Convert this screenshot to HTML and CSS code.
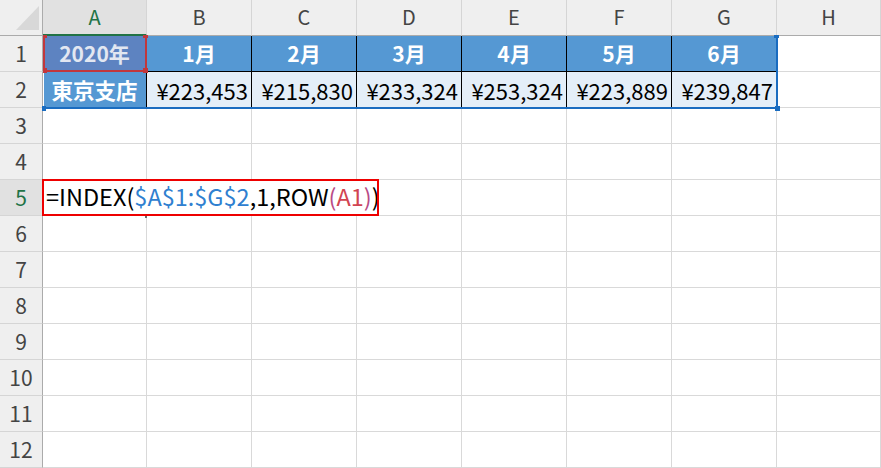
FILE: index.html
```html
<!DOCTYPE html>
<html lang="ja">
<head>
<meta charset="utf-8">
<title>Sheet</title>
<link rel="stylesheet" href="styles.css">
</head>
<body>
<div class="sheet">
  <div class="corner"><svg class="tri" width="42" height="35" viewBox="0 0 42 35"><polygon points="16,30 39,30 39,6" fill="#d8d8d8"/></svg></div>
  <div class="ch ch-active">A</div><div class="ch">B</div><div class="ch">C</div><div class="ch">D</div><div class="ch">E</div><div class="ch">F</div><div class="ch">G</div><div class="ch">H</div>

  <div class="rh">1</div>
  <div class="c head head-a">2020年</div>
  <div class="c head">1月</div><div class="c head">2月</div><div class="c head">3月</div><div class="c head">4月</div><div class="c head">5月</div><div class="c head">6月</div>
  <div class="c"></div>

  <div class="rh">2</div>
  <div class="c branch">東京支店</div>
  <div class="c val">¥223,453</div><div class="c val">¥215,830</div><div class="c val">¥233,324</div><div class="c val">¥253,324</div><div class="c val">¥223,889</div><div class="c val">¥239,847</div>
  <div class="c"></div>

  <div class="rh">3</div><div class="c"></div><div class="c"></div><div class="c"></div><div class="c"></div><div class="c"></div><div class="c"></div><div class="c"></div><div class="c"></div>
  <div class="rh">4</div><div class="c"></div><div class="c"></div><div class="c"></div><div class="c"></div><div class="c"></div><div class="c"></div><div class="c"></div><div class="c"></div>

  <div class="rh rh-active">5</div>
  <div class="c formula">=INDEX(<span class="ref-blue">$A$1:$G$2</span>,1,ROW<span class="paren">(</span><span class="ref-red">A1</span><span class="paren">)</span>)</div>
  <div class="c"></div><div class="c"></div><div class="c"></div><div class="c"></div>

  <div class="rh">6</div><div class="c"></div><div class="c"></div><div class="c"></div><div class="c"></div><div class="c"></div><div class="c"></div><div class="c"></div><div class="c"></div>
  <div class="rh">7</div><div class="c"></div><div class="c"></div><div class="c"></div><div class="c"></div><div class="c"></div><div class="c"></div><div class="c"></div><div class="c"></div>
  <div class="rh">8</div><div class="c"></div><div class="c"></div><div class="c"></div><div class="c"></div><div class="c"></div><div class="c"></div><div class="c"></div><div class="c"></div>
  <div class="rh">9</div><div class="c"></div><div class="c"></div><div class="c"></div><div class="c"></div><div class="c"></div><div class="c"></div><div class="c"></div><div class="c"></div>
  <div class="rh">10</div><div class="c"></div><div class="c"></div><div class="c"></div><div class="c"></div><div class="c"></div><div class="c"></div><div class="c"></div><div class="c"></div>
  <div class="rh">11</div><div class="c"></div><div class="c"></div><div class="c"></div><div class="c"></div><div class="c"></div><div class="c"></div><div class="c"></div><div class="c"></div>
  <div class="rh">12</div><div class="c"></div><div class="c"></div><div class="c"></div><div class="c"></div><div class="c"></div><div class="c"></div><div class="c"></div><div class="c"></div>

  <div class="range-blue">
    <span class="hdl hdl-b hdl-tr"></span>
    <span class="hdl hdl-b hdl-br"></span>
    <span class="hdl hdl-b hdl-bl"></span>
  </div>
  <div class="range-red">
    <span class="hdl hdl-r hdl-tl"></span>
    <span class="hdl hdl-r hdl-tr"></span>
    <span class="hdl hdl-r hdl-bl"></span>
    <span class="hdl hdl-r hdl-br"></span>
  </div>
  <div class="fill-tick"></div>
  <div class="note-box"></div>
</div>
</body>
</html>
```
FILE: styles.css
```css
html, body {
  margin: 0;
  padding: 0;
  background: #ffffff;
  overflow: hidden;
}

.sheet {
  position: relative;
  display: grid;
  grid-template-columns: 43px 104px repeat(6, 105px) 104px;
  grid-template-rows: repeat(13, 36px);
  width: 881px;
  height: 468px;
  font-family: "Noto Sans CJK JP", "Noto Sans", sans-serif;
  color: #000;
}

.corner {
  background: #efefef;
  border-right: 1px solid #ababab;
  border-bottom: 1px solid #ababab;
  box-sizing: border-box;
  position: relative;
}
.tri {
  display: block;
}

.ch {
  background: #efefef;
  border-right: 1px solid #d5d5d5;
  border-bottom: 1px solid #ababab;
  box-sizing: border-box;
  display: flex;
  align-items: center;
  justify-content: center;
  font-size: 20px;
  line-height: 1;
  color: #444;
  padding-bottom: 1px;
}
.ch-active {
  background: #e1e1e1;
  color: #217346;
  border-bottom: 2px solid #217346;
  padding-bottom: 0;
}

.rh {
  background: #efefef;
  border-right: 1px solid #ababab;
  border-bottom: 1px solid #d5d5d5;
  box-sizing: border-box;
  display: flex;
  align-items: center;
  justify-content: center;
  font-size: 21px;
  line-height: 1;
  color: #444;
}
.rh-active {
  background: #e1e1e1;
  color: #217346;
}

.c {
  border-right: 1px solid #d9d9d9;
  border-bottom: 1px solid #d9d9d9;
  box-sizing: border-box;
  display: flex;
  align-items: center;
  font-size: 22px;
  line-height: 1;
  white-space: nowrap;
  min-width: 0;
}

.head {
  background: #5598d3;
  color: #ffffff;
  font-weight: bold;
  font-size: 21px;
  justify-content: center;
  border-right-color: #000;
  border-bottom-color: #000;
}
.head-a {
  background: #5d83c1;
  color: #e2e7f1;
}

.branch {
  background: #5598d3;
  color: #ffffff;
  font-weight: bold;
  font-size: 21.5px;
  justify-content: center;
  border-right-color: #000;
}

.val {
  background: #e4eef8;
  justify-content: flex-end;
  padding-right: 3px;
  border-right-color: #000;
}

.formula {
  grid-column: span 4;
  padding-left: 3px;
  padding-bottom: 2px;
  font-size: 23.5px;
  overflow: visible;
}
.ref-blue { color: #2f80d0; }
.ref-red { color: #d24452; }
.paren { color: #b84a86; }

/* overlays */
.range-blue {
  position: absolute;
  left: 43px;
  top: 36px;
  width: 735px;
  height: 73px;
  box-sizing: border-box;
  border-left: 1px solid #ffffff;
  border-right: 2px solid #1a6cc0;
  border-bottom: 2px solid #1a6cc0;
}
.range-red {
  position: absolute;
  left: 43px;
  top: 36px;
  width: 104px;
  height: 36px;
  box-sizing: border-box;
  border-left: 2px solid #c1373c;
  border-right: 2px solid #c1373c;
  border-bottom: 2px solid #c1373c;
}
.hdl {
  position: absolute;
  width: 5px;
  height: 5px;
}
.hdl-b { background: #1a6cc0; }
.hdl-r { background: #c1373c; }
.range-blue .hdl-tr { right: -3px; top: -1px; width: 5px; height: 3px; }
.range-blue .hdl-br { right: -4px; bottom: -4px; }
.range-blue .hdl-bl { left: -2px; bottom: -4px; width: 4px; }
.range-red .hdl-tl { left: -2px; top: -1px; width: 4px; height: 3px; }
.range-red .hdl-tr { right: -3px; top: -1px; height: 3px; }
.range-red .hdl-bl { left: -2px; bottom: -3px; width: 4px; }
.range-red .hdl-br { right: -3px; bottom: -3px; }

.fill-tick {
  position: absolute;
  left: 145px;
  top: 215px;
  width: 2px;
  height: 3px;
  background: #6a6a6a;
}

.note-box {
  position: absolute;
  left: 42px;
  top: 179px;
  width: 337px;
  height: 37px;
  box-sizing: border-box;
  border: 2px solid #ee0000;
}
```
